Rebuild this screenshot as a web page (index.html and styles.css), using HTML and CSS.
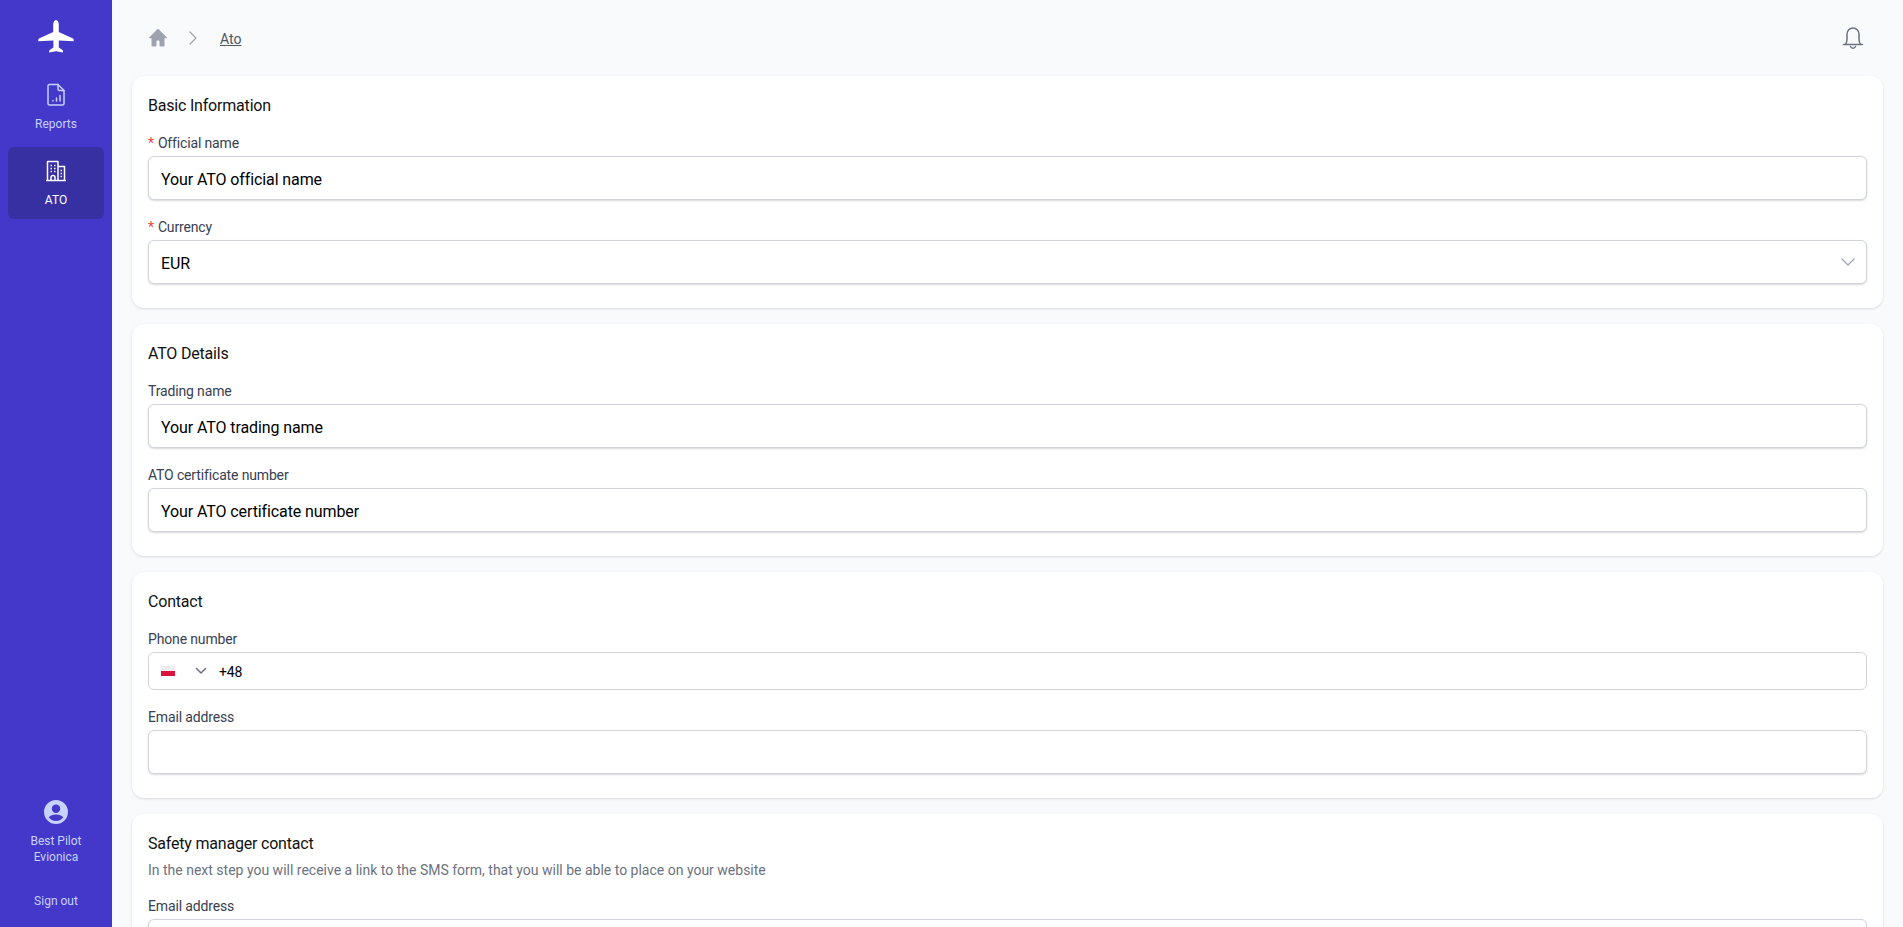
FILE: index.html
```html
<!DOCTYPE html>
<html lang="en">
<head>
<meta charset="utf-8">
<title>Ato</title>
<link rel="stylesheet" href="styles.css">
</head>
<body>
<div class="app">
  <aside class="sidebar">
    <div class="logo">
      <svg width="36" height="36" viewBox="0 0 36 36" fill="#fff"><path d="M18 1c1.700 0 2.800 2.200 2.800 4.800V13l14.200 6.600c.5.300.7.700.7 1.300v1.300l-14.900-.7v7l3.700 2.600c.3.200.5.500.5.900v1.500l-6.900-1.300-6.900 1.300v-1.500c0-.4.200-.7.500-.9l3.700-2.600v-7L.3 22.200v-1.300c0-.6.200-1 .7-1.300L15.200 13V5.800C15.200 3.200 16.300 1 18 1z"/></svg>
    </div>
    <a class="nav-item">
      <svg width="24" height="24" viewBox="0 0 24 24" fill="none" stroke="#c7d2fe" stroke-width="1.500" stroke-linejoin="round" stroke-linecap="round"><path d="M5.500 1.500h8.500l6 6v13a1.500 1.500 0 0 1-1.500 1.500h-13A1.500 1.500 0 0 1 4 20.500V3a1.500 1.500 0 0 1 1.500-1.500z"/><path d="M14 1.500V6a1.500 1.500 0 0 0 1.500 1.500H20"/><path d="M9 18v-.5M12.500 18v-3M16 18v-5.500"/></svg>
      <span>Reports</span>
    </a>
    <a class="nav-item active">
      <svg width="24" height="24" viewBox="0 0 24 24" fill="none" stroke="#fff" stroke-width="1.500" stroke-linejoin="round"><path d="M2 21.500h20M3.500 21.500V2.500h10.500v19M14 7.500h6.500v14"/><path d="M6.500 6.500h1.500M10 6.500h1.500M6.500 9.500h1.500M10 9.500h1.500M6.500 12.500h1.500M10 12.500h1.500M16.500 11.500h1.500M16.500 14.500h1.500M16.500 17.500h1.500"/><path d="M7 21.500v-3a2 2 0 0 1 4 0v3"/></svg>
      <span>ATO</span>
    </a>
    <div class="sidebar-spacer"></div>
    <div class="user">
      <svg width="24" height="24" viewBox="0 0 24 24" fill="#c7d2fe"><path fill-rule="evenodd" d="M12 0a12 12 0 1 0 0 24 12 12 0 0 0 0-24zm0 4.500a4.200 4.200 0 1 1 0 8.400 4.200 4.200 0 0 1 0-8.400zM12 21c-3.100 0-5.700-1.500-7.300-3.700 1.200-1.700 4-2.800 7.300-2.800s6.100 1.100 7.300 2.800C17.700 19.500 15.100 21 12 21z"/></svg>
      <span>Best Pilot<br>Evionica</span>
    </div>
    <a class="signout">Sign out</a>
  </aside>
  <main class="main">
    <header class="topbar">
      <nav class="crumbs">
        <svg width="20" height="20" viewBox="0 0 20 20" fill="#9ca3af"><path d="M10.700 1.300a1 1 0 0 0-1.400 0l-8 8a.6.6 0 0 0 .4 1H3.500V17.500a1 1 0 0 0 1 1h3a1 1 0 0 0 1-1V13.500a1 1 0 0 1 1-1h1a1 1 0 0 1 1 1v4a1 1 0 0 0 1 1h3a1 1 0 0 0 1-1V10.300h1.800a.6.6 0 0 0 .4-1l-8-8z"/></svg>
        <svg class="crumb-sep" width="10" height="16" viewBox="0 0 10 16" fill="none" stroke="#9ca3af" stroke-width="1.200" stroke-linecap="round" stroke-linejoin="round"><path d="M2 2l6 6-6 6"/></svg>
        <a class="crumb-link">Ato</a>
      </nav>
      <svg class="bell" width="24" height="24" viewBox="0 0 24 24" fill="none" stroke="#6b7280" stroke-width="1.500" stroke-linecap="round" stroke-linejoin="round"><path d="M2.500 18.500h19M4.500 18.500c1-1.500 1.500-3 1.500-5.500V8a6 6 0 0 1 12 0v5c0 2.500.5 4 1.500 5.500"/><path d="M9.500 20.500a2.700 2.700 0 0 0 5 0"/></svg>
    </header>

    <section class="card">
      <h2>Basic Information</h2>
      <div class="field">
        <label><span class="req">*</span>Official name</label>
        <div class="input">Your ATO official name</div>
      </div>
      <div class="field">
        <label><span class="req">*</span>Currency</label>
        <div class="input select">EUR
          <svg class="chev" width="14" height="8" viewBox="0 0 14 8" fill="none" stroke="#9ca3af" stroke-width="1.200" stroke-linecap="round" stroke-linejoin="round"><path d="M1 1l6 6 6-6"/></svg>
        </div>
      </div>
    </section>

    <section class="card">
      <h2>ATO Details</h2>
      <div class="field">
        <label>Trading name</label>
        <div class="input">Your ATO trading name</div>
      </div>
      <div class="field">
        <label>ATO certificate number</label>
        <div class="input">Your ATO certificate number</div>
      </div>
    </section>

    <section class="card">
      <h2>Contact</h2>
      <div class="field">
        <label>Phone number</label>
        <div class="input phone">
          <span class="flag"></span>
          <svg class="phone-chev" width="12" height="8" viewBox="0 0 12 8" fill="none" stroke="#6b7280" stroke-width="1.500" stroke-linecap="round" stroke-linejoin="round"><path d="M1.500 1.500L6 6l4.500-4.500"/></svg>
          <span class="dial">+48</span>
        </div>
      </div>
      <div class="field">
        <label>Email address</label>
        <div class="input"></div>
      </div>
    </section>

    <section class="card">
      <h2 class="with-sub">Safety manager contact</h2>
      <p class="sub">In the next step you will receive a link to the SMS form, that you will be able to place on your website</p>
      <div class="field">
        <label>Email address</label>
        <div class="input"></div>
      </div>
    </section>
  </main>
</div>
</body>
</html>
```
FILE: styles.css
```css
* { box-sizing: border-box; }
html, body { margin: 0; height: 100%; overflow: hidden; }
body { font-family: Roboto, "Open Sans", sans-serif; background: #f9fafb; color: #000; }
.app { display: flex; height: 927px; overflow: hidden; }
.sidebar { width: 112px; flex: none; background: #4338ca; display: flex; flex-direction: column; align-items: center; padding: 19px 8px 0; }
.logo { height: 36px; display: flex; margin-bottom: 16px; }
.nav-item { width: 96px; height: 72px; border-radius: 6px; display: flex; flex-direction: column; align-items: center; padding-top: 12px; gap: 9px; font-size: 12px; line-height: 16px; color: #c7d2fe; margin-bottom: 4px; }
.nav-item.active { background: #3730a3; color: #fff; }
.sidebar-spacer { flex: 1; }
.user { display: flex; flex-direction: column; align-items: center; text-align: center; gap: 9px; font-size: 12px; line-height: 16px; color: #c7d2fe; }
.signout { font-size: 12px; line-height: 16px; color: #c7d2fe; margin-top: 28px; margin-bottom: 18px; }
.main { flex: 1; min-width: 0; padding: 0 20px; overflow: hidden; }
.topbar { height: 76px; display: flex; align-items: center; justify-content: space-between; padding: 0 18px 0 16px; }
.crumbs { display: flex; align-items: center; gap: 16px; }
.crumb-sep { margin: 0 6px 0 4px; }
.crumb-link { font-size: 14px; line-height: 20px; padding-top: 2px; color: #4b5563; text-decoration: underline; }
.card { background: #fff; border-radius: 12px; padding: 16px 16px 24px; margin-bottom: 16px; box-shadow: 0 1px 3px rgba(0,0,0,.1), 0 1px 2px -1px rgba(0,0,0,.1); }
h2 { margin: 0 0 14px; padding-top: 2px; font-size: 16px; line-height: 24px; font-weight: 400; letter-spacing: -.2px; color: #111; }
h2.with-sub { margin-bottom: 3px; }
.sub { margin: 0 0 15px; font-size: 14px; line-height: 20px; padding-top: 1px; color: #6b7280; }
.field { margin-bottom: 16px; }
.field:last-child { margin-bottom: 0; }
label { display: block; font-size: 14px; line-height: 20px; padding-top: 1px; letter-spacing: -.15px; color: #374151; margin-bottom: 3px; }
.req { color: #ef4444; margin-right: 4px; }
.input { height: 44px; border: 1px solid #d1d5db; border-radius: 6px; background: #fff; padding: 3px 12px 0; display: flex; align-items: center; font-size: 16px; line-height: 24px; letter-spacing: -.1px; box-shadow: 0 1px 2px rgba(0,0,0,.15); }
.select { justify-content: space-between; }
.chev { margin-right: -1px; margin-top: -3px; }
.phone { height: 38px; font-size: 14px; padding: 0 12px; box-shadow: none; }
.flag { width: 14px; height: 10px; background: linear-gradient(#eeeeee 50%, #dc143c 50%); }
.phone-chev { margin-left: 20px; }
.dial { margin-left: 12px; padding-top: 2px; }
```
